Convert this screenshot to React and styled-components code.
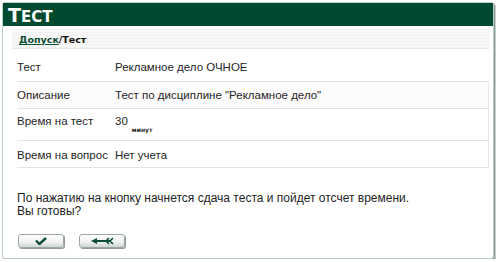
import React from 'react';
import styled, { createGlobalStyle } from 'styled-components';

const Global = createGlobalStyle`
    body {
        margin: 0;
        background: #fff;
        font-family: "Liberation Sans", Arial, sans-serif;
    }
`;

const Panel = styled.div`
    box-sizing: border-box;
    width: 492px;
    height: 257px;
    margin: 2px 0 0 2px;
    border: 1px solid #b9cdc5;
    border-radius: 3px;
    box-shadow: 1px 1px 0 #8c9a95, 2px 2px 0 #c4cfcb;
    background: #fff;
    display: flex;
    flex-direction: column;
`;

const Header = styled.div`
    height: 23px;
    background: #01492f;
    color: #fff;
    font-family: "DejaVu Sans", Verdana, sans-serif;
    font-weight: bold;
    font-size: 15px;
    text-transform: uppercase;
    line-height: 24px;
    padding-left: 5px;

    &::first-letter {
        font-size: 19px;
    }
`;

const Content = styled.div`
    padding: 3px 4px 0 9px;
    display: flex;
    flex-direction: column;
`;

const Crumbs = styled.div`
    height: 18px;
    border-top: 1px solid #eef3f1;
    border-bottom: 1px solid #e2e6e4;
    background: repeating-linear-gradient(to bottom, #f7f8f7 0 2px, #f1f2f1 2px 3px);
    font-family: "DejaVu Sans", Verdana, sans-serif;
    font-size: 9.5px;
    font-weight: bold;
    line-height: 19px;
    padding-left: 7px;
    color: #111;

    a {
        color: #0b4d33;
        text-decoration: underline;
    }
`;

const Table = styled.div`
    margin: 6px 0 0 5px;
    display: flex;
    flex-direction: column;
    font-size: 11.5px;
    color: #262626;
`;

const Row = styled.div`
    display: grid;
    grid-template-columns: 98px 1fr;
    align-items: start;
    height: ${p => p.$h}px;
    padding-top: ${p => p.$pt}px;
    box-sizing: border-box;
    border-bottom: 1px solid #dde4e1;
    border-right: 1px solid ${p => p.$edge ? '#e4eae8' : 'transparent'};
    background: ${p => p.$shade ? '#fcfcfc' : '#fff'};
`;

const Unit = styled.span`
    font-family: "DejaVu Sans", sans-serif;
    font-size: 6px;
    font-weight: bold;
    vertical-align: -7px;
    margin-left: 4px;
`;

const Note = styled.p`
    margin: 24px 0 0 5px;
    font-size: 12px;
    line-height: 13px;
    color: #1e1e1e;
`;

const Buttons = styled.div`
    display: flex;
    gap: 15px;
    margin: 16px 0 0 6px;
`;

const Button = styled.button`
    width: 46px;
    height: 14px;
    padding: 0;
    border: 1px solid #9aa7a2;
    border-radius: 3px;
    background: linear-gradient(to bottom, #ffffff 0%, #f1f3f2 55%, #cfd6d3 100%);
    box-shadow: 1px 1px 0 #8f9c97;
    display: flex;
    align-items: center;
    justify-content: center;
`;

const Check = () => (
    <svg width="12" height="8" viewBox="0 0 12 8">
        <path d="M1 3.5 L4.5 7 L11 1" fill="none" stroke="#0a4f33" strokeWidth="2.4" />
    </svg>
);

const Back = () => (
    <svg width="24" height="8" viewBox="0 0 24 8">
        <path d="M1 4 L7 1 L7 7 Z" fill="#0a4f33" />
        <path d="M6 4 H21" stroke="#0a4f33" strokeWidth="2" />
        <path d="M19 1 L16 4 L19 7 M23 1 L20 4 L23 7" fill="none" stroke="#0a4f33" strokeWidth="1.6" />
    </svg>
);

const rows = [
    { label: 'Тест', value: 'Рекламное дело ОЧНОЕ', h: 27, pt: 6 },
    { label: 'Описание', value: 'Тест по дисциплине "Рекламное дело"', h: 27, pt: 7, shade: true, edge: true },
    { label: 'Время на тест', value: <>30<Unit>минут</Unit></>, h: 32, pt: 6, edge: true },
    { label: 'Время на вопрос', value: 'Нет учета', h: 27, pt: 8, edge: true },
];

const App = () => (
    <>
        <Global />
        <Panel>
            <Header>Тест</Header>
            <Content>
                <Crumbs><a>Допуск</a>/Тест</Crumbs>
                <Table>
                    {rows.map(r => (
                        <Row key={r.label} $h={r.h} $pt={r.pt} $shade={r.shade} $edge={r.edge}>
                            <span>{r.label}</span>
                            <span>{r.value}</span>
                        </Row>
                    ))}
                </Table>
                <Note>
                    По нажатию на кнопку начнется сдача теста и пойдет отсчет времени.<br />
                    Вы готовы?
                </Note>
                <Buttons>
                    <Button><Check /></Button>
                    <Button><Back /></Button>
                </Buttons>
            </Content>
        </Panel>
    </>
);

export default App;
